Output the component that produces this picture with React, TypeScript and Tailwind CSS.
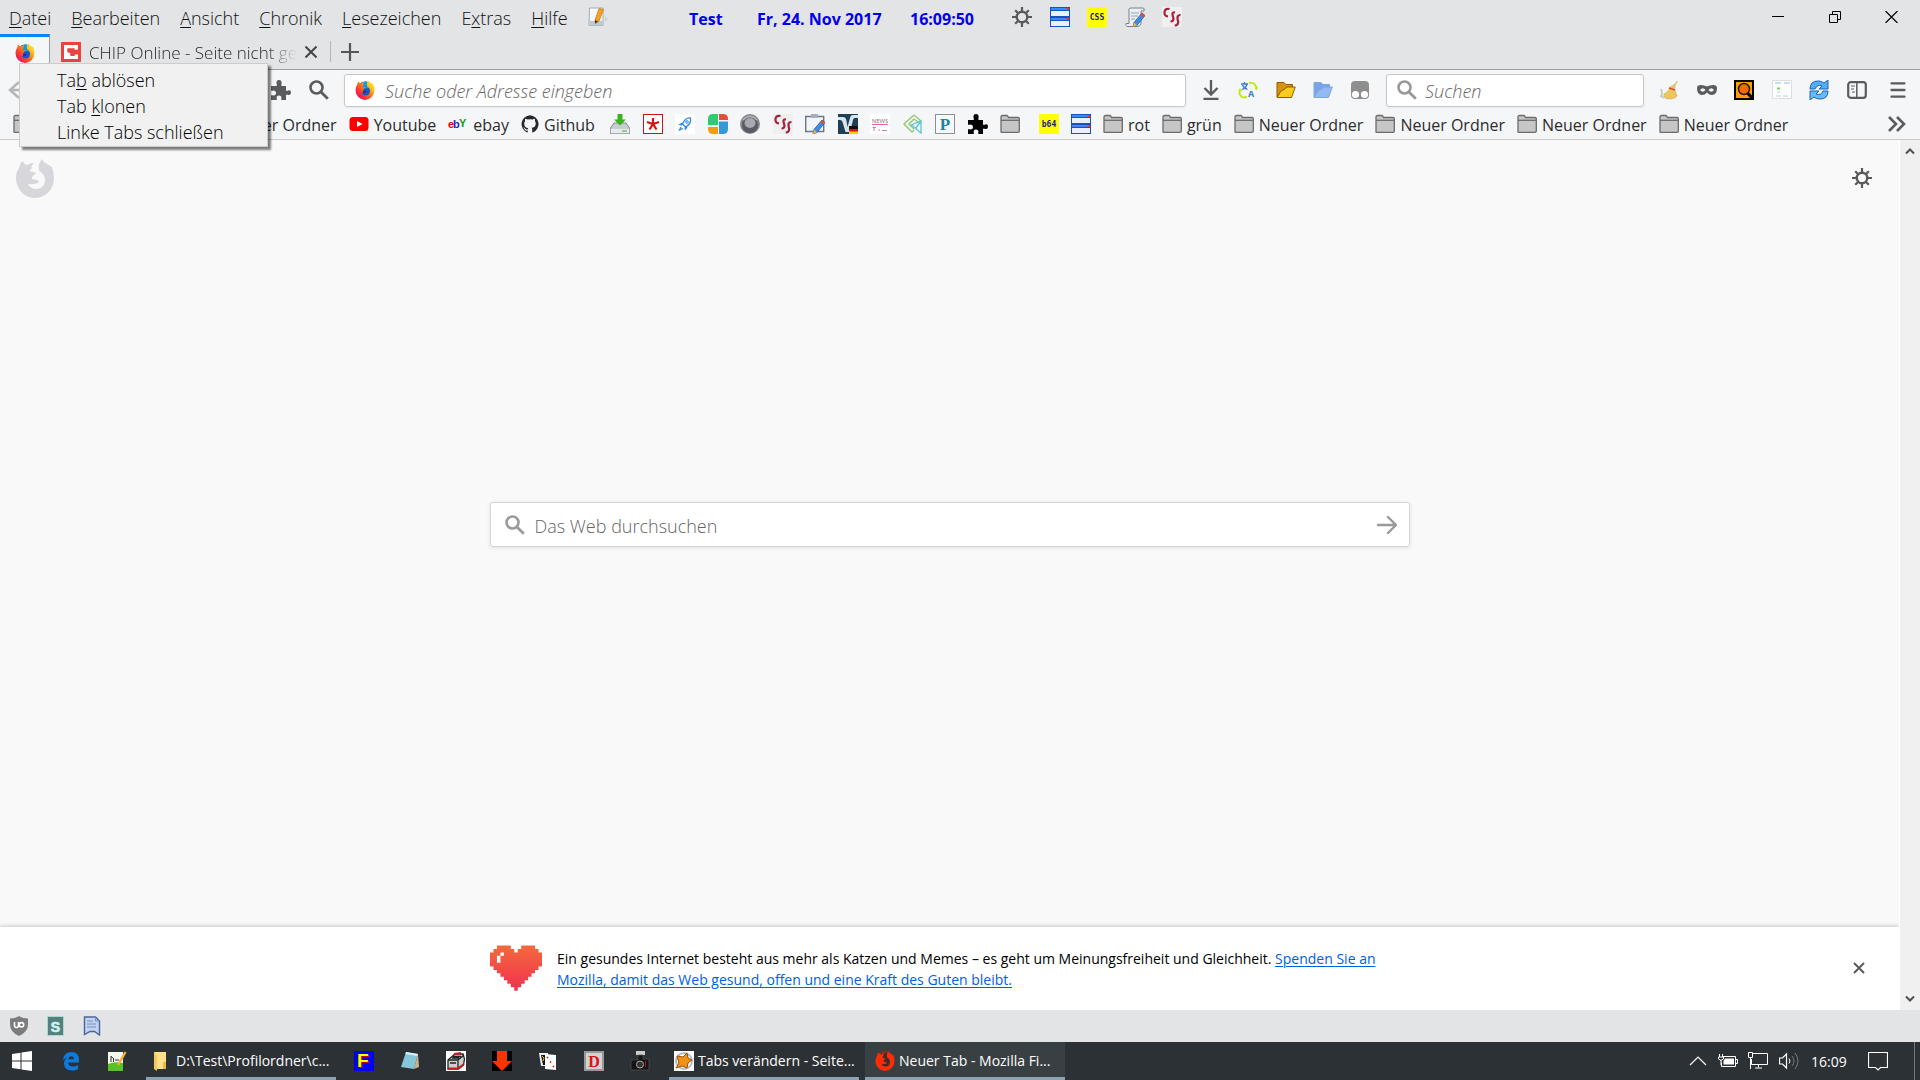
import type { ReactNode } from "react";

const FOX =
  "M4.7 4.7 L6.7 3.3 Q8.5 7 11.3 7 Q14 5 18 4.7 Q15 7.5 15.5 10.5 L13.3 13 L19.7 14.7 Q19.5 17 16.7 17.7 L15.7 21 L21.7 22.3 L23 23.7 Q21 26.5 17.3 26 L11.7 26.3 Q15 31 20 31 Q27.5 31 28.7 24 Q30 21 28.3 18.7 Q28 16 23.3 13 Q22 9 23 6 L25.7 1 Q28 5 35.7 8.7 Q38 14 38 20 A19 20 0 0 1 0 20 Q0 14 3 10 Z";

const Svg = ({ children, box = "0 0 20 20", className = "size-5" }: { children: ReactNode; box?: string; className?: string }) => (
  <svg viewBox={box} className={`${className} shrink-0`} fill="none" aria-hidden="true">
    {children}
  </svg>
);

const Firefox = ({ id }: { id: string }) => (
  <Svg box="0 0 38 40">
    <defs>
      <linearGradient id={id} x1="1" y1="0" x2="0.1" y2="0.9">
        <stop offset="0" stopColor="#fff44f" />
        <stop offset="0.3" stopColor="#ffc619" />
        <stop offset="0.55" stopColor="#ff6d1a" />
        <stop offset="0.8" stopColor="#fb2a3c" />
        <stop offset="1" stopColor="#e0107a" />
      </linearGradient>
    </defs>
    <circle cx="19" cy="18" r="15" fill="#0a5bd3" />
    <circle cx="21" cy="10" r="7" fill="#0a9ae8" />
    <path d={FOX} fill={`url(#${id})`} />
    <path d="M15 21 l7 1 l1 2 q-3 3 -8 2 z" fill="#262a8c" />
  </Svg>
);

const Gear = () => (
  <Svg>
    <circle cx="10" cy="10" r="5.300" stroke="#58595b" strokeWidth="2.400" />
    <path
      d="M10 0v4M10 16v4M0 10h4M16 10h4M3.200 3.200l2.800 2.800M14 14l2.800 2.800M3.200 16.800L6 14M14 6l2.800-2.800"
      stroke="#58595b"
      strokeWidth="2.200"
    />
  </Svg>
);

const Magnifier = ({ color }: { color: string }) => (
  <Svg>
    <circle cx="7.5" cy="7.5" r="6" stroke={color} strokeWidth="2.6" />
    <path d="M12 12l6.8 6.8" stroke={color} strokeWidth="2.8" />
  </Svg>
);

const Puzzle = ({ color }: { color: string }) => (
  <Svg>
    <path
      d="M0 6h5.500q1-1 0-2.200Q5 0 8 0t2.600 3.800Q9.800 5 10.800 6H15v4.500q1 .8 2 0Q20 9.500 20 12.500t-3 2.500q-1-.8-2 0V20h-4.500q-.8-1 0-2Q10.500 15.500 8 15.500T5.600 18q.8 1 0 2H0v-4.500q1-.8 2 0Q5 15.500 5 13t-3-2.500q-1 .8-2 0z"
      fill={color}
    />
  </Svg>
);

const Folder = () => (
  <Svg>
    <path d="M1 18V3q0-1.500 1.500-1.500h4q1 0 1.500 1l.5 1H18q1.300 0 1.300 1.300V17q0 1.300-1.300 1.300H1.800z" fill="#c6c6c6" stroke="#6b6b6b" strokeWidth="1.300" />
    <path d="M1 6.300h18.300" stroke="#6b6b6b" strokeWidth="1.300" />
  </Svg>
);

const OpenFolder = ({ front, back, line }: { front: string; back: string; line: string }) => (
  <Svg>
    <path d="M1 17V2.500h7l2 2h6.500V8" fill={back} stroke={line} />
    <path d="M1 17.500L5 11l3-1.500L11 7h8.300l-3.800 10.500z" fill={front} stroke={line} />
  </Svg>
);

const Windows2 = () => (
  <Svg>
    {[0, 10].map((y) => (
      <g key={y}>
        <rect x="0.500" y={y + 0.5} width="19" height="9" fill="#e9f2fc" stroke="#1554c0" />
        <rect x="0.500" y={y + 0.5} width="19" height="3" fill="#3b8cf0" stroke="#1554c0" />
        <rect x="16.500" y={y + 1} width="2.500" height="2" fill="#e0402c" />
      </g>
    ))}
  </Svg>
);

const YellowTag = ({ label }: { label: string }) => (
  <Svg>
    <rect width="20" height="20" fill="#ffff00" />
    <text x="10" y="13" textAnchor="middle" fontSize="8" fontWeight="bold" fontFamily="DejaVu Sans Mono, monospace" fill="#1a1a8c">
      {label}
    </text>
  </Svg>
);

const CssScript = () => (
  <Svg>
    <rect width="20" height="20" fill="#efefef" />
    <path d="M7.500 2Q3 1 2.500 5t3.500 4.500M13 5.500q-3-.5-2.500 2t1 4q0 3-3 3M18.500 8q-3 0-3 2.500t.7 4q0 4-3.500 4" stroke="#a8203c" strokeWidth="2.200" />
  </Svg>
);

const Pencil = () => (
  <>
    <path d="M17 6l3 2.500-8 10-4 1.500 1-4.500z" fill="#3f8fe0" stroke="#1d4f9b" strokeWidth="0.700" />
    <path d="M17 6l3 2.500-1.500 2-3.200-2.500z" fill="#e34b33" />
    <path d="M9 15.500l3 3L8 20z" fill="#f3b24d" />
  </>
);

const Notepad = () => (
  <Svg>
    <path d="M1.500 1H15v17.500H1z" fill="#f7f8fa" stroke="#a3acb5" />
    <path d="M2 14h13v4.500H1z" fill="#bccad6" />
    <path d="M11 1.500L15.500 2.500 11 14l-3.500 2.500L7 13z" fill="#f6a21c" stroke="#ba6a10" strokeWidth="0.600" />
    <path d="M7 13l3 1.500-3 2z" fill="#453525" />
    <path d="M17 9l3 3-3 3z" fill="#d0d2d4" />
  </Svg>
);

const ScriptEdit = () => (
  <Svg>
    <path d="M5 1h13q2 0 1 3h-3v13q-1 2.500-4 2.500H2q-2-1-1-3h3V4q-1-2 1-3z" fill="#eceff2" stroke="#79828b" />
    <path d="M6 6h8M6 9h7M6 12h4" stroke="#9ba4ad" />
    <Pencil />
  </Svg>
);

const menus: [string, string, string][] = [
  ["", "D", "atei"],
  ["", "B", "earbeiten"],
  ["", "A", "nsicht"],
  ["", "C", "hronik"],
  ["", "L", "esezeichen"],
  ["E", "x", "tras"],
  ["", "H", "ilfe"],
];

const MenuBar = () => (
  <header className="flex h-[34px] items-center bg-[#e3e4e6]">
    <nav className="flex w-[689px] shrink-0 items-center gap-5 pl-[9px] text-lg font-light leading-6 text-[#111]">
      {menus.map(([pre, key, post]) => (
        <button key={key} className="pt-px">
          {pre}
          <span className="underline underline-offset-2">{key}</span>
          {post}
        </button>
      ))}
      <button aria-label="Notizen"><Notepad /></button>
    </nav>
    <div className="flex w-[323px] shrink-0 gap-6 pt-1 text-base font-bold leading-6 text-[#0000ee]">
      <span className="w-11">Test</span>
      <span className="w-[129px]">Fr, 24. Nov 2017</span>
      <span>16:09:50</span>
    </div>
    <div className="flex w-[170px] shrink-0 justify-between">
      <button aria-label="Einstellungen"><Gear /></button>
      <button aria-label="Fenster"><Windows2 /></button>
      <button aria-label="Stylesheet"><YellowTag label="CSS" /></button>
      <button aria-label="Skript"><ScriptEdit /></button>
      <button aria-label="Stil"><CssScript /></button>
    </div>
    <div className="ml-auto flex">
      <button aria-label="Minimieren" className="grid w-[57px] place-items-center">
        <Svg box="0 0 12 12" className="size-3"><path d="M0 5.500h12" stroke="#000" /></Svg>
      </button>
      <button aria-label="Wiederherstellen" className="grid w-[57px] place-items-center">
        <Svg box="0 0 12 12" className="size-3"><path d="M.5 3.500h8v8h-8zM3.500 3.500v-3h8v8h-3" stroke="#000" /></Svg>
      </button>
      <button aria-label="Beenden" className="grid w-[57px] place-items-center">
        <Svg box="0 0 13 12" className="h-3 w-[13px]"><path d="M.5 0l12 12M12.500 0l-12 12" stroke="#000" strokeWidth="1.200" /></Svg>
      </button>
    </div>
  </header>
);

const TabStrip = () => (
  <div className="flex h-9 border-b border-[#9c9da0] bg-[#e3e4e6]">
    <button aria-label="Neuer Tab" className="z-10 -mb-px flex w-[50px] justify-center border-t-[3px] border-r border-t-[#0a84ff] border-r-[#9c9da0] bg-[#f5f6f8] pt-[6px]">
      <Firefox id="foxTab" />
    </button>
    <div className="flex w-[280px] items-center pl-[11px]">
      <Svg>
        <rect width="20" height="20" fill="#ea4141" />
        <path d="M3 3h14v5h-3.500V6.500h-7v3.500l3 1v2.500h4V12H17v5H3z" fill="#fff" />
        <path d="M6.500 6.500h7V8L17 7.500v5h-3.500v1.500h-4V11l-3-1z" fill="#ea4141" />
      </Svg>
      <button className="ml-2 w-[208px] whitespace-nowrap bg-linear-to-r from-[#222] from-85% to-transparent bg-clip-text pt-0.5 text-left text-[17px] font-light leading-6 text-transparent">
        CHIP Online - Seite nicht ge
      </button>
      <button aria-label="Tab schließen" className="ml-2">
        <Svg box="0 0 12 12" className="size-3"><path d="M.5 .5l11 11M11.500 .5l-11 11" stroke="#444" strokeWidth="2" /></Svg>
      </button>
    </div>
    <div className="my-[7px] w-px bg-[#b4b5b7]" />
    <button aria-label="Neuen Tab öffnen" className="ml-[10px]">
      <Svg box="0 0 18 18" className="size-[18px]"><path d="M9 0v18M0 9h18" stroke="#555" strokeWidth="2.200" /></Svg>
    </button>
  </div>
);

const field = "flex h-[33px] items-center rounded-[3px] border border-[#c8c8c8] bg-white px-[10px] shadow-[0_1px_3px_rgba(0,0,0,0.05)]";
const fieldInput = "min-w-0 flex-1 bg-transparent pt-0.5 text-lg font-light leading-6 italic outline-none placeholder:text-[#666]";

const NavBar = () => (
  <div className="flex h-10 items-center bg-[#f5f6f8]">
    <div className="flex w-[344px] shrink-0 items-center pl-2">
      <button aria-label="Zurück">
        <Svg><path d="M11 2L2 10l9 8M2 10h17" stroke="#b5b6b8" strokeWidth="2.400" /></Svg>
      </button>
      <button aria-label="Erweiterungen" className="ml-auto"><Puzzle color="#5a5b5d" /></button>
      <button aria-label="Suche" className="mr-[15px] ml-[18px]"><Magnifier color="#5a5b5d" /></button>
    </div>
    <div className={`${field} flex-1 gap-[10px]`}>
      <Firefox id="foxUrl" />
      <input aria-label="Adresse" placeholder="Suche oder Adresse eingeben" className={fieldInput} />
    </div>
    <div className="flex w-[200px] shrink-0 items-center justify-between pr-4 pl-[15px]">
      <button aria-label="Downloads">
        <Svg><path d="M10 0v14M3.500 8L10 14.500 16.500 8M2.500 18.800h15" stroke="#5a5b5d" strokeWidth="2.300" /></Svg>
      </button>
      <button aria-label="Übersetzen">
        <Svg>
          <path d="M2 9q-2 6 3 8.500l4-.5M11 3q7-1 7.500 6" stroke="#c3e812" strokeWidth="1.900" />
          <path d="M16.500 8l2 2.500 1.500-3.500zM1 12l1-4 2.500 3z" fill="#c3e812" />
          <path d="M3 4h7M6.500 2v2M4 9.500q4-1.500 5-5.500M4.500 5q1 3 5 4.500" stroke="#3a7bd0" strokeWidth="1.300" />
          <text x="10" y="17" fontSize="9" fontWeight="bold" fontFamily="Open Sans, sans-serif" fill="#3a7bd0">A</text>
        </Svg>
      </button>
      <button aria-label="Profilordner"><OpenFolder front="#fbcb1c" back="#d9920f" line="#8e5a06" /></button>
      <button aria-label="Ordner"><OpenFolder front="#93b9f2" back="#7ba4e6" line="#7fa5e2" /></button>
      <button aria-label="Skripte">
        <Svg>
          <path d="M1 5q0-4 4-4h10q4 0 4 4v10q0 4-4 4H5q-4 0-4-4z" fill="#8e8e8e" />
          <circle cx="5.500" cy="14.500" r="3.600" fill="#fff" />
          <circle cx="14.500" cy="14.500" r="3.600" fill="#fff" />
        </Svg>
      </button>
    </div>
    <div className={`${field} w-[258px] shrink-0 gap-2`}>
      <Magnifier color="#999" />
      <input aria-label="Suchen" placeholder="Suchen" className={fieldInput} />
    </div>
    <div className="flex w-[276px] shrink-0 items-center justify-between pr-3 pl-[15px]">
      <button aria-label="Aufräumen">
        <Svg>
          <path d="M18.500 1q-3 4-3 8l2.500 7q-3 4-11 2.500Q4 17 5 14q5-2 6-7 4-1 7.500-6z" fill="#eec65f" stroke="#d6a84a" strokeWidth="0.600" />
          <path d="M10 8l6 2" stroke="#d8503c" strokeWidth="1.500" />
          <path d="M2 9q2 5 0 7l3 2" stroke="#c3cfc0" strokeWidth="2" />
        </Svg>
      </button>
      <button aria-label="Privat">
        <Svg>
          <path fillRule="evenodd" d="M0 8q0-3 4-3 3 0 6 1.500Q13 5 16 5q4 0 4 3 0 7-5 7-3 0-5-2.500Q8 15 5 15 0 15 0 8zm3 2q2.700 3.500 5.500 0-2.700-3.500-5.500 0zm8.500 0q2.700 3.500 5.500 0-2.700-3.500-5.500 0z" fill="#5a5b5d" />
        </Svg>
      </button>
      <button aria-label="Lupe">
        <Svg>
          <rect x="1" y="1" width="18" height="18" fill="#fb9d0b" stroke="#000" strokeWidth="2" />
          <circle cx="10" cy="9" r="5.500" fill="#ff6a00" stroke="#2c1500" strokeWidth="1.500" />
          <path d="M13.500 13l5.500 6" stroke="#000" strokeWidth="3" />
        </Svg>
      </button>
      <button aria-label="Seite">
        <Svg>
          <path d="M.5 .5h19v18H.5z" fill="#fcfdfe" stroke="#dcdfe2" />
          <path d="M3 3h6M12 3h6" stroke="#b5d3f1" strokeWidth="1.500" />
          <path d="M5 8.500h3" stroke="#7ccf52" strokeWidth="2" />
          <path d="M5 12h3M4 16h5M11 16h5" stroke="#c8ccd2" />
        </Svg>
      </button>
      <button aria-label="Neu laden">
        <Svg>
          <path d="M1 9Q1 1 9 1q4 0 6 2l4-3v9h-9l3-3q-5-2-7 3z" fill="#55aef2" stroke="#1f62bd" />
          <path d="M19 11q0 8-8 8-4 0-6-2l-4 3v-9h9l-3 3q5 2 7-3z" fill="#64bdf7" stroke="#1f62bd" />
        </Svg>
      </button>
      <button aria-label="Seitenleiste">
        <Svg>
          <rect x="1.200" y="2.200" width="17.600" height="15.600" rx="2.500" stroke="#5a5b5d" strokeWidth="2.200" />
          <path d="M9.800 2v16" stroke="#5a5b5d" strokeWidth="1.500" />
          <path d="M4 6h4M4 9h3M5 12h3" stroke="#5a5b5d" strokeWidth="1.200" />
        </Svg>
      </button>
      <button aria-label="Menü" className="ml-1">
        <Svg><path d="M3.500 3.300h13M3.500 10h13M3.500 16.700h13" stroke="#5a5b5d" strokeWidth="2.300" strokeLinecap="round" /></Svg>
      </button>
    </div>
  </div>
);

const Bookmark = ({ icon, children }: { icon: ReactNode; children: string }) => (
  <a href="#" className="flex items-center gap-[5px] whitespace-nowrap">
    {icon}
    <span className="pt-0.5">{children}</span>
  </a>
);

const BookmarksBar = () => (
  <div className="flex h-[30px] items-center border-b border-[#cbcbcb] bg-[#f5f6f8] pb-[2px] text-base leading-6 text-[#2c2c2c]">
    <div className="flex w-[610px] shrink-0 items-center gap-3 pl-[13px]">
      <a href="#" aria-label="Lesezeichenordner" className="mr-[162px]"><Folder /></a>
      <Bookmark icon={<Folder />}>Neuer Ordner</Bookmark>
      <Bookmark icon={<Svg><rect x="0.500" y="3" width="19" height="14" rx="3.500" fill="#f00" /><path d="M8 7v6l5.500-3z" fill="#fff" /></Svg>}>
        Youtube
      </Bookmark>
      <Bookmark
        icon={
          <Svg>
            <g fontSize="11" fontWeight="bold" fontFamily="Liberation Sans, sans-serif">
              <text x="0" y="14" fill="#e60000">e</text>
              <text x="5" y="14" fill="#1226dd">b</text>
              <text x="11" y="13" fill="#0f9b12">Y</text>
            </g>
          </Svg>
        }
      >
        ebay
      </Bookmark>
      <Bookmark
        icon={
          <Svg box="0 0 16 16" className="size-[18px]">
            <path
              fill="#24292e"
              d="M8 .2a8 8 0 0 0-2.500 15.400c.4 0 .5-.2.5-.4v-1.400c-2.200.5-2.700-1-2.700-1-.4-.9-.9-1.200-.9-1.200-.7-.5.1-.5.1-.5.800.1 1.200.8 1.200.8.700 1.300 1.900.9 2.300.7.1-.5.3-.9.500-1.100-1.800-.2-3.600-.9-3.600-4 0-.9.300-1.600.800-2.100-.1-.2-.4-1 .1-2.100 0 0 .7-.2 2.200.8a7.500 7.500 0 0 1 4 0c1.500-1 2.200-.8 2.200-.8.400 1.100.2 1.900.1 2.100.5.6.800 1.300.800 2.100 0 3.100-1.900 3.700-3.700 3.900.3.400.6.900.6 1.600v2.200c0 .2.100.5.600.4A8 8 0 0 0 8 .2z"
            />
          </Svg>
        }
      >
        Github
      </Bookmark>
    </div>
    <div className="flex w-[410px] shrink-0 items-center justify-between">
      <a href="#" aria-label="Download">
        <Svg>
          <path d="M4 9h12l4 6v5H0v-5z" fill="#c9cdd0" stroke="#81878c" />
          <path d="M1 15h18v4H1z" fill="#e9ebec" />
          <path d="M12 17h5" stroke="#4da53a" />
          <path d="M7.500 0h5v5.500H16l-6 6-6-6h3.500z" fill="#36b51e" />
        </Svg>
      </a>
      <a href="#" aria-label="Stern">
        <Svg>
          <rect x="0.500" y="0.500" width="19" height="19" fill="#fff" stroke="#c81414" />
          <path d="M10 4v6M4 8l6 2 6-2M6.500 15.500L10 10l3.500 5.500" stroke="#d01414" strokeWidth="2.200" />
        </Svg>
      </a>
      <a href="#" aria-label="Rakete">
        <Svg>
          <rect width="20" height="20" fill="#fff" />
          <path d="M15.500 4q-5-1-8 6l3 3q6-3 5-9zM7.500 9L5 10.500l2 .5M10.500 13L10 15.500 12 13M6 13l-1.500 3L8 14.500" stroke="#2f8be6" strokeWidth="1.300" />
          <circle cx="12" cy="8" r="1.300" stroke="#2f8be6" />
        </Svg>
      </a>
      <a href="#" aria-label="Kacheln">
        <Svg>
          <path d="M5 0h5v11H0V5q0-5 5-5z" fill="#2ecc71" />
          <path d="M11 0h4q5 0 5 5v1h-9z" fill="#e74c3c" />
          <path d="M0 13h10v7H5q-5 0-5-5z" fill="#f39c12" />
          <path d="M11 7.500h9V15q0 5-5 5h-4z" fill="#3498db" />
        </Svg>
      </a>
      <a href="#" aria-label="Ring">
        <Svg>
          <circle cx="10" cy="10" r="10" fill="#85888d" />
          <circle cx="10" cy="11" r="8" fill="#585b61" />
          <ellipse cx="10" cy="9" rx="5.500" ry="5" fill="#a6a9ae" />
          <path d="M3 6q7-7 14 0" stroke="#b4b7bb" strokeWidth="1.500" />
        </Svg>
      </a>
      <a href="#" aria-label="Stil"><CssScript /></a>
      <a href="#" aria-label="Formular">
        <Svg>
          <path d="M.7 2.500h18v15H.7z" fill="#f2f6fb" stroke="#6d7886" strokeWidth="1.400" />
          <path d="M6 0h7v4H6z" fill="#a6adb6" />
          <Pencil />
        </Svg>
      </a>
      <a href="#" aria-label="Forum">
        <Svg>
          <rect width="20" height="20" fill="#1f3f56" />
          <path d="M0 3h5q3 0 3.500 4l1 6 2.500-9q.5-3 3-3h5v3h-3.500q-1 0-1.500 2l-3 12H7.500L4.500 8Q4 6 2 6H0z" fill="#d9e4ea" />
          <path d="M11 12h9v3h-9z" fill="#111" />
          <path d="M11 15h9v2.500h-9z" fill="#e01212" />
          <path d="M11 17.500h9V20h-9z" fill="#fc0" />
        </Svg>
      </a>
      <a href="#" aria-label="News">
        <Svg>
          <rect width="20" height="20" fill="#fff" />
          <text x="10" y="9" textAnchor="middle" fontSize="6" fontFamily="Open Sans, sans-serif" fill="#777">NEWS</text>
          <path d="M2 10.500h16" stroke="#ec5fa9" />
          <path d="M4 13v4M2.500 13.500H6M8 16h2M12 16.500h5" stroke="#d47bab" />
        </Svg>
      </a>
      <a href="#" aria-label="Raute">
        <Svg>
          <path d="M11 1L1 10l8 8 2-2M11 1l7 6M11 5l-5 5 5 5M11 5l4 3" stroke="#93ca74" strokeWidth="1.500" />
          <path d="M18 7v12L8.500 11zM18 7l-5 7" stroke="#56c3dc" strokeWidth="1.300" />
        </Svg>
      </a>
      <a href="#" aria-label="P">
        <Svg>
          <rect x="0.500" y="0.500" width="19" height="19" fill="#f5f9fa" stroke="#8b9196" />
          <text x="10" y="16" textAnchor="middle" fontSize="17" fontWeight="bold" fontFamily="Liberation Serif, serif" fill="#1f829e">P</text>
        </Svg>
      </a>
      <a href="#" aria-label="Erweiterung"><Puzzle color="#000" /></a>
      <a href="#" aria-label="Ordner"><Folder /></a>
    </div>
    <div className="ml-[19px] flex items-center gap-3">
      <a href="#" aria-label="Base64"><YellowTag label="b64" /></a>
      <a href="#" aria-label="Fenster"><Windows2 /></a>
      {["rot", "grün", "Neuer Ordner", "Neuer Ordner", "Neuer Ordner", "Neuer Ordner"].map((name, i) => (
        <Bookmark key={i} icon={<Folder />}>{name}</Bookmark>
      ))}
    </div>
    <button aria-label="Weitere Lesezeichen" className="mr-[13px] ml-auto">
      <Svg><path d="M2 3l7 7-7 7M10 3l7 7-7 7" stroke="#5a5b5d" strokeWidth="2.600" /></Svg>
    </button>
  </div>
);

const ContextMenu = () => (
  <div role="menu" className="absolute top-[63px] left-[19px] z-20 flex w-[249px] flex-col border border-[#ccc] bg-[#f1f1f1] pt-[3px] pb-px text-lg font-light leading-[26px] text-black shadow-[3px_3px_2px_rgba(0,0,0,0.5)]">
    <button role="menuitem" className="pl-[37px] text-left">Ta<span className="underline underline-offset-2">b</span> ablösen</button>
    <button role="menuitem" className="pl-[37px] text-left">Tab <span className="underline underline-offset-2">k</span>lonen</button>
    <button role="menuitem" className="pl-[37px] text-left">Linke Tabs schließen</button>
  </div>
);

// first/last filled column of each heart row
const heartRows: [number, number, number][] = [
  [0, 2, 5], [0, 9, 12], [1, 1, 6], [1, 8, 13], [2, 0, 14], [3, 0, 14], [4, 0, 14], [5, 0, 14],
  [6, 1, 13], [7, 2, 12], [8, 3, 11], [9, 4, 10], [10, 5, 9], [11, 6, 8], [12, 7, 7],
];

const Heart = () => (
  <Svg box="0 0 15 13" className="h-[46px] w-[52px]">
    <defs>
      <linearGradient id="heart" x1="0" y1="0" x2="0" y2="13" gradientUnits="userSpaceOnUse">
        <stop offset="0" stopColor="#f26a3d" />
        <stop offset="1" stopColor="#f2304f" />
      </linearGradient>
    </defs>
    <path d={heartRows.map(([y, a, b]) => `M${a} ${y}h${b - a + 1}v1.050h${a - b - 1}z`).join("")} fill="url(#heart)" />
    <path d="M3 2h1v1H3zM2 3h1v2H2z" fill="#fff" />
  </Svg>
);

const Content = () => (
  <main className="flex flex-1 bg-[#f9f9f9]">
    <div className="flex min-w-0 flex-1 flex-col">
      <div className="flex items-start justify-between pt-[18px] pr-[27px] pl-4">
        <Svg box="0 0 38 40" className="h-10 w-[38px]"><path d={FOX} fill="#d7d7db" /></Svg>
        <button aria-label="Seite anpassen" className="mt-[10px]"><Gear /></button>
      </div>
      <form className="mx-auto mt-[304px] flex h-[45px] w-[920px] items-center gap-[10px] rounded-[3px] border border-[#d6d6d6] bg-white px-3.5 shadow-[0_1px_4px_rgba(0,0,0,0.1)]">
        <Magnifier color="#9b9b9b" />
        <input aria-label="Das Web durchsuchen" placeholder="Das Web durchsuchen" className="min-w-0 flex-1 pt-0.5 text-lg font-light leading-6 outline-none placeholder:text-[#666]" />
        <button aria-label="Suchen" type="button" className="-mr-0.5">
          <Svg><path d="M1 10h17M11 2l8 8-8 8" stroke="#999" strokeWidth="2.400" strokeLinecap="round" strokeLinejoin="round" /></Svg>
        </button>
      </form>
      <section className="mt-auto flex h-[83px] items-center bg-white pb-0.5 pl-[47px] shadow-[0_-1px_4px_rgba(0,0,0,0.2)]">
        <div className="mx-auto flex w-[920px] items-center gap-[15px]">
          <Heart />
          <p className="w-[840px] pt-0.5 text-sm leading-[21px] text-black">
            Ein gesundes Internet besteht aus mehr als Katzen und Memes – es geht um Meinungsfreiheit und Gleichheit.{" "}
            <a href="#" className="text-[#0060df] underline underline-offset-2">
              Spenden Sie an
              <br />
              Mozilla, damit das Web gesund, offen und eine Kraft des Guten bleibt.
            </a>
          </p>
        </div>
        <button aria-label="Schließen" className="mr-[34px]">
          <Svg box="0 0 12 12" className="size-3"><path d="M1 1l10 10M11 1L1 11" stroke="#5a5b5d" strokeWidth="2" /></Svg>
        </button>
      </section>
    </div>
    <div className="z-10 flex w-[21px] flex-col items-center justify-between border-l border-white bg-[#f0f0f0] py-[7px]">
      <Svg box="0 0 10 8" className="h-2 w-[10px]"><path d="M1 6.500l4-4 4 4" stroke="#505050" strokeWidth="2" /></Svg>
      <Svg box="0 0 10 8" className="h-2 w-[10px]"><path d="M1 1.500l4 4 4-4" stroke="#505050" strokeWidth="2" /></Svg>
    </div>
  </main>
);

const StatusBar = () => (
  <div className="flex h-8 items-center gap-[17px] bg-[#e3e4e6] pl-[9px]">
    <button aria-label="uBlock">
      <Svg>
        <path d="M10 0q4 2.500 9 2.500v6Q19 16 10 20 1 16 1 8.500v-6Q6 2.500 10 0z" fill="#7c7c7c" />
        <path d="M5.500 6v3.500q0 2 2 2t2-2V6" stroke="#fff" strokeWidth="1.600" />
        <circle cx="12.500" cy="8.800" r="2.200" stroke="#fff" strokeWidth="1.600" />
      </Svg>
    </button>
    <button aria-label="Stylish">
      <Svg>
        <rect x="1.500" y="0.500" width="16" height="19" rx="1" fill="#587f7c" stroke="#a5dcd7" />
        <text x="9.500" y="15.500" textAnchor="middle" fontSize="14" fontWeight="bold" fontFamily="Liberation Sans, sans-serif" fill="#c9f5f0" stroke="#c9f5f0" strokeWidth="0.700">S</text>
      </Svg>
    </button>
    <button aria-label="Skripte">
      <Svg>
        <path d="M1.500 1h11l4 4v14l-5-3.500H7L1.500 18.500z" fill="#c3d3ee" stroke="#4a659c" strokeWidth="1.400" />
        <path d="M12.500 1v4h4M4 5h6M4 8h9M4 11h9" stroke="#6f8cc0" />
      </Svg>
    </button>
  </div>
);

const taskIcon = "grid w-[46px] place-items-center";
const taskWindow = "ml-[6px] flex items-center gap-1 border-b-[3px] border-[#8da2b0] pt-[3px] whitespace-nowrap";

const Taskbar = () => (
  <footer className="flex h-[38px] bg-[#2c3135] text-sm text-white">
    <button aria-label="Start" className="grid w-12 place-items-center pr-1">
      <Svg><path d="M0 3l8.500-1.200v7.700H0zM9.500 1.600L20 0v9.500H9.500zM0 10.500h8.500v7.700L0 17zM9.500 10.500H20V20L9.500 18.400z" fill="#fff" /></Svg>
    </button>
    <button aria-label="Edge" className={taskIcon}>
      <Svg>
        <path d="M2 9Q3 1 10.500 1 18 1 18 9v2.500H7q.5 4 5 4 3 0 5-1.500v4q-2 1.500-6 1.500-7.500 0-8-7 0-4 3.500-6Q4 7 2 9zm5.500-.8H13q0-3-2.700-3T7.500 8.200z" fill="#0c7bdc" />
      </Svg>
    </button>
    <button aria-label="Notepad++" className={taskIcon}>
      <Svg>
        <path d="M1 1h15v19H1z" fill="#f5f8ef" />
        <path d="M1 13q7-3 15-1v8H1z" fill="#58c226" />
        <path d="M4 5v6M6.500 7v4M9 8v2M11 8v2M4 5.500l2 1.500" stroke="#333" />
        <path d="M18.500 1L11 14" stroke="#f0b03a" strokeWidth="2.500" />
      </Svg>
    </button>
    <button className={`${taskWindow} w-[190px] pl-[6px]`}>
      <Svg><path d="M2 1h12v17H5z" fill="#ffe08a" /><path d="M2 1l3 3v16l-3-2z" fill="#f7c95c" /><path d="M11 11h3v7h-3z" fill="#e9b949" /></Svg>
      D:\Test\Profilordner\c...
    </button>
    <button aria-label="F" className={`${taskIcon} ml-[5px]`}>
      <Svg>
        <rect width="20" height="20" fill="#0000f0" />
        <text x="4" y="17" fontSize="19" fontWeight="bold" fontFamily="Liberation Sans, sans-serif" fill="#c00000">F</text>
        <text x="3" y="16" fontSize="19" fontWeight="bold" fontFamily="Liberation Sans, sans-serif" fill="#ffff00">F</text>
      </Svg>
    </button>
    <button aria-label="Editor" className={taskIcon}>
      <Svg><path d="M6 1l12 2-4 15-13-2z" fill="#85c7d8" /><path d="M6 1l12 2-.5 2L5.500 3z" fill="#dff0f4" /><path d="M18 3l1 13-5 2z" fill="#c9b48a" /></Svg>
    </button>
    <button aria-label="Toaster" className={taskIcon}>
      <Svg>
        <rect width="20" height="20" fill="#fff" />
        <path d="M2 9l7-6h8l1.500 5-1 6-5 4H2z" fill="#cfcfcf" stroke="#222" strokeWidth="1.300" />
        <path d="M2 9h10l6-5M12 9v8M4 12h6M7 5.500h8M6 7h7" stroke="#222" strokeWidth="1.300" />
        <path d="M2 17.500h10l6-4.500M8 3l7-1" stroke="#cb1c1c" strokeWidth="2" />
      </Svg>
    </button>
    <button aria-label="Downloader" className={taskIcon}>
      <Svg><rect width="20" height="20" fill="#000" /><path d="M5 0h10v10h5L10 20 0 10h5z" fill="#ff3300" /></Svg>
    </button>
    <button aria-label="Karten" className={taskIcon}>
      <Svg>
        <path d="M1 2h9v13H3z" fill="#eee" />
        <path d="M3 4h5v10H5z" fill="#141414" />
        <path d="M4 5l2 2-1 3" stroke="#e3b514" />
        <path d="M7 3l11 1v15l-11-1z" fill="#fff" />
        <path d="M9 6h1v1H9zM12 10.500h1v1h-1zM15 15h1v1h-1z" fill="#e11" stroke="#e11" strokeWidth="0.600" />
      </Svg>
    </button>
    <button aria-label="D" className={taskIcon}>
      <Svg>
        <rect width="20" height="20" fill="#999" />
        <rect x="2" y="2" width="16" height="16" fill="#d3d3d3" />
        <text x="10" y="15.500" textAnchor="middle" fontSize="16" fontWeight="bold" fontFamily="Liberation Serif, serif" fill="#e01212">D</text>
      </Svg>
    </button>
    <button aria-label="Kamera" className={taskIcon}>
      <Svg>
        <path d="M6 0h9v4H6z" fill="#ccc" />
        <path d="M8 4h5v4h6v11H1V9h7z" fill="#151515" stroke="#555" strokeWidth="0.700" />
        <circle cx="10" cy="13.500" r="3.500" fill="#333" stroke="#aaa" />
        <path d="M15.500 10v6" stroke="#9c2020" />
      </Svg>
    </button>
    <button className={`${taskWindow} w-[190px] pl-[5px]`}>
      <Svg>
        <rect width="20" height="20" fill="#fff" />
        <circle cx="10" cy="10" r="8" stroke="#b7bcc4" strokeWidth="2" />
        <path d="M3 5l6 1 4-4 1 5 4 2-4 3-1 5-5-2-6 2 3-5z" fill="#f19214" stroke="#915708" />
      </Svg>
      Tabs verändern - Seite...
    </button>
    <button className={`${taskWindow} w-[200px] bg-[#394043] pl-[10px]`}>
      <Svg box="0 0 38 40">
        <circle cx="19" cy="19" r="17" fill="#3b2d2b" stroke="#c0260c" strokeWidth="2" />
        <path d={FOX} fill="#ff2c06" />
      </Svg>
      Neuer Tab - Mozilla Fi...
    </button>
    <div className="ml-auto flex items-center">
      <div className="flex w-[110px] items-center justify-between">
        <Svg box="0 0 18 10" className="h-[10px] w-[18px]"><path d="M1 9l8-8 8 8" stroke="#fff" strokeWidth="1.200" /></Svg>
        <Svg>
          <path d="M5 5.500h12.500v10H3.500v-4" stroke="#fff" />
          <path d="M7 7.500h9v6H5.500V10z" fill="#fff" />
          <path d="M18 8.500h1.500v4H18M1.500 3v3M4.500 3v3M.5 6h5v2L3 9.500.5 8zM3 9v5" stroke="#fff" />
        </Svg>
        <Svg><path d="M5 2.500h14.500v11H3.500V8M.5 1.500h4v5h-4zM2.500 6.500V18M10.500 13.500v3M7 17h7" stroke="#fff" /></Svg>
        <Svg>
          <path d="M.5 7h3l4-4v14l-4-4h-3z" stroke="#fff" strokeWidth="1.200" />
          <path d="M10 7.500q2 2.500 0 5" stroke="#fff" />
          <path d="M13 5q4 5 0 10M16 2q6 8 0 16" stroke="#777b7e" />
        </Svg>
      </div>
      <time className="ml-3 w-[57px] pt-0.5">16:09</time>
      <button aria-label="Benachrichtigungen" className="mr-[26px]">
        <Svg><path d="M.5 1.500h19v15h-7L10 19l-2.500-2.500h-7z" stroke="#fff" strokeWidth="1.200" /></Svg>
      </button>
      <div className="mr-[5px] h-[38px] w-px bg-[#75797c]" />
    </div>
  </footer>
);

export default function App() {
  return (
    <div className="relative flex min-h-screen flex-col overflow-hidden font-['Open_Sans',sans-serif]">
      <MenuBar />
      <TabStrip />
      <NavBar />
      <BookmarksBar />
      <ContextMenu />
      <Content />
      <StatusBar />
      <Taskbar />
    </div>
  );
}
